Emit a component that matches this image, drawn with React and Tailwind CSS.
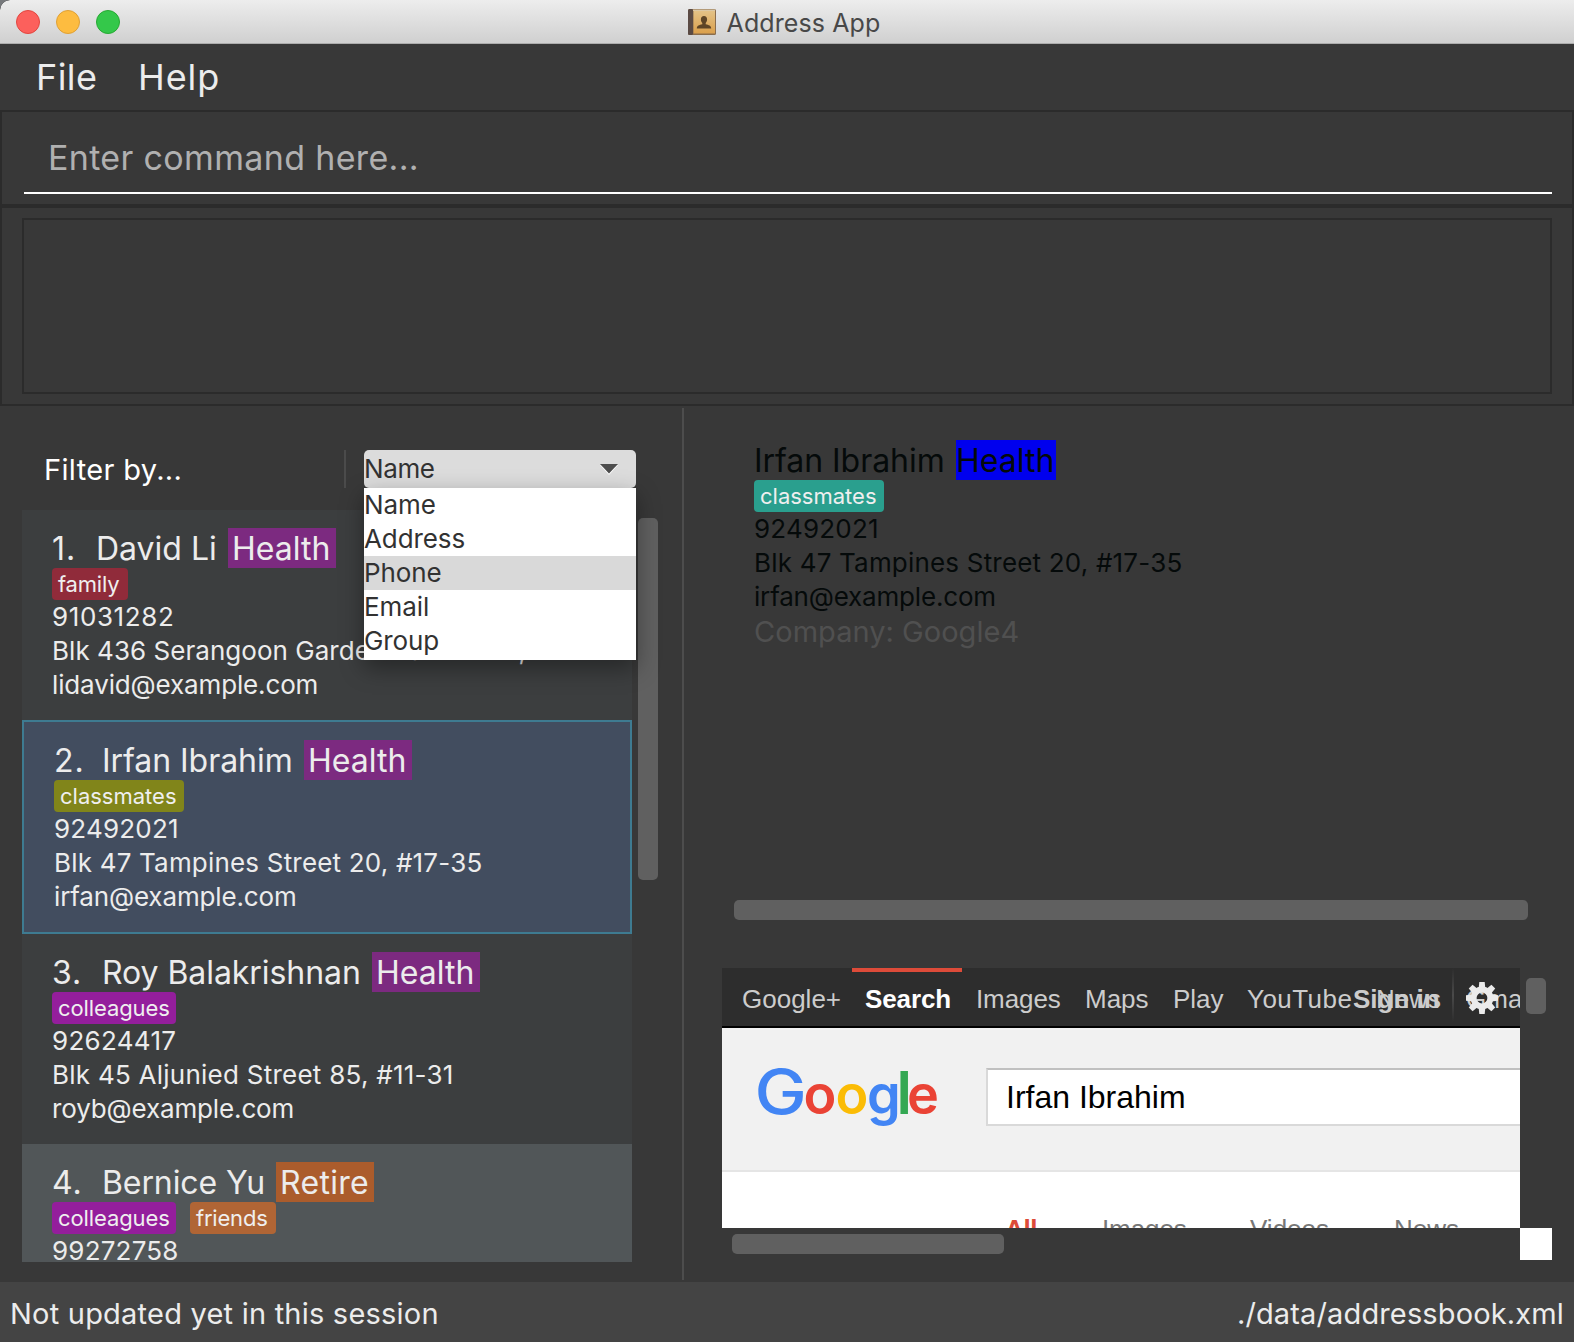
const contacts = [
  {
    index: '1.', name: 'David Li', group: 'Health', groupClass: 'w-[108px] bg-[#7c2a80]',
    indexClass: 'w-[44px]', nameClass: 'w-[132px]',
    tags: [['family', 'w-[76px] bg-[#902b3a] tracking-[-0.2px]']],
    phone: '91031282', phoneClass: 'tracking-[0.6px]',
    address: 'Blk 436 Serangoon Gardens Street 26, #16-43', addressClass: 'tracking-[0.04px]',
    email: 'lidavid@example.com',
    rowClass: 'h-[210px] px-[30px] py-[18px] bg-[#3c3e3f]',
  },
  {
    index: '2.', name: 'Irfan Ibrahim', group: 'Health', groupClass: 'w-[108px] bg-[#7c2a80]',
    indexClass: 'w-[48px]', nameClass: 'w-[202px] tracking-[-0.05px]',
    tags: [['classmates', 'w-[130px] bg-[#81851a]']],
    phone: '92492021', phoneClass: 'tracking-[0.2px]',
    address: 'Blk 47 Tampines Street 20, #17-35', addressClass: 'tracking-[0.19px]',
    email: 'irfan@example.com',
    rowClass: 'h-[214px] border-2 border-[#3e7b91] px-[30px] py-[18px] bg-[#424d5f]',
  },
  {
    index: '3.', name: 'Roy Balakrishnan', group: 'Health', groupClass: 'w-[108px] bg-[#7c2a80]',
    indexClass: 'w-[50px]', nameClass: 'w-[270px] tracking-[-0.06px]',
    tags: [['colleagues', 'w-[124px] bg-[#941e9c] tracking-[-0.1px]']],
    phone: '92624417', phoneClass: 'tracking-[0.3px]',
    address: 'Blk 45 Aljunied Street 85, #11-31', addressClass: 'tracking-[0.25px]',
    email: 'royb@example.com',
    rowClass: 'h-[210px] px-[30px] py-[18px] bg-[#3c3e3f]',
  },
  {
    index: '4.', name: 'Bernice Yu', group: 'Retire', groupClass: 'w-[98px] bg-[#ab5c2c] tracking-[0.3px]',
    indexClass: 'w-[50px]', nameClass: 'w-[174px] tracking-[-0.1px]',
    tags: [
      ['colleagues', 'w-[124px] bg-[#941e9c] tracking-[-0.1px]'],
      ['friends', 'w-[86px] bg-[#b06535] tracking-[-0.2px]'],
    ],
    phone: '99272758', phoneClass: 'tracking-[0.2px]',
    address: '', addressClass: '', email: '',
    rowClass: 'h-[118px] px-[30px] py-[18px] bg-[#515658]',
  },
];

const filters = ['Name', 'Address', 'Phone', 'Email', 'Group'];

const navItems = [
  ['Google+', 'w-[123px]'],
  ['Search', 'w-[111px] font-bold text-white tracking-[-0.1px]'],
  ['Images', 'w-[109px] tracking-[-0.1px]'],
  ['Maps', 'w-[88px]'],
  ['Play', 'w-[74px]'],
  ['YouTube', 'w-[129px] tracking-[0.45px]'],
  ['News', 'w-[90px]'],
  ['Gmail', 'w-[90px]'],
];

function Tag({ label, className }) {
  return (
    <span className={`h-8 shrink-0 rounded-[4px] pl-1.5 text-[22px] leading-8 text-[#efefef] ${className}`}>
      {label}
    </span>
  );
}

function ContactRow({ contact: c }) {
  return (
    <div className={`shrink-0 overflow-hidden whitespace-nowrap text-[#ececec] ${c.rowClass}`}>
      <div className="flex h-10 text-[32px] leading-[42px]">
        <span className={`shrink-0 tracking-[1px] ${c.indexClass}`}>{c.index}</span>
        <span className={`shrink-0 ${c.nameClass}`}>{c.name}</span>
        <span className={`h-10 shrink-0 pl-1 ${c.groupClass}`}>{c.group}</span>
      </div>
      <div className="flex gap-3.5">
        {c.tags.map(([label, cls]) => <Tag key={label} label={label} className={cls} />)}
      </div>
      <div className="text-[26px] leading-[34px]">
        <p className={c.phoneClass}>{c.phone}</p>
        <p className={c.addressClass}>{c.address}</p>
        <p className="tracking-[-0.14px]">{c.email}</p>
      </div>
    </div>
  );
}

function AddressBookIcon() {
  return (
    <svg className="h-7 w-7" viewBox="0 0 28 28">
      <defs>
        <linearGradient id="cover" x1="0" y1="0" x2="0" y2="1">
          <stop offset="0" stopColor="#e3c286" />
          <stop offset="1" stopColor="#dba04c" />
        </linearGradient>
      </defs>
      <rect x="0" y="1" width="28" height="26" rx="1.5" fill="#8a6d4d" />
      <rect x="0" y="1" width="5" height="26" rx="1.5" fill="#5a4a44" />
      <rect x="5.5" y="3" width="21.5" height="22.5" fill="url(#cover)" />
      <rect x="5" y="1.6" width="22" height="1.2" fill="#f1dfba" />
      <path d="M16 8c2 0 3.100 1.400 3.100 3.400 0 1.500-.7 2.700-1.400 3.500v1.300c3 .8 5.500 1.300 5.500 4.300H8.800c0-3 2.500-3.500 5.500-4.300v-1.300c-.8-.8-1.400-2-1.400-3.500C12.900 9.400 14 8 16 8z" fill="#5e4526" />
    </svg>
  );
}

function Gear() {
  const angles = [0, 45, 90, 135, 180, 225, 270, 315];
  return (
    <svg className="absolute left-[743px] top-[13px] h-[34px] w-[34px]" viewBox="-17 -17 34 34">
      <g fill="#ebebeb">
        {angles.map((a) => (
          <path key={a} d="M-3.400 -9 L-2.700 -16 H2.700 L3.400 -9 Z" transform={`rotate(${a})`} />
        ))}
      </g>
      <circle r="8.400" fill="none" stroke="#ebebeb" strokeWidth="6" />
    </svg>
  );
}

function GoogleLogo() {
  return (
    <svg className="ml-9 h-[72px] w-[184px] shrink-0" viewBox="0 0 184 72" fontFamily="Inter, sans-serif" fontSize="54" fontWeight="600">
      <text y="50.5" transform="scale(1.13 1)" fontSize="62" fontWeight="500" fill="#4285f4" x="-3.2">G</text>
      <text y="50.5">
        <tspan x="45.5" fill="#ea4335">o</tspan>
        <tspan x="77.5" fill="#fbbc05">o</tspan>
        <tspan x="109" fill="#4285f4">g</tspan>
        <tspan x="138.5" fill="#34a853" fontSize="59">l</tspan>
        <tspan x="149" fill="#ea4335">e</tspan>
      </text>
    </svg>
  );
}

function TitleBar() {
  return (
    <header className="relative flex h-11 items-center justify-center rounded-tl-[10px] border-b border-[#adadad] bg-linear-to-b from-[#ededed] to-[#d0d0d0]">
      <div className="absolute left-4 top-[10px] flex gap-4">
        <span className="size-6 rounded-full border border-[#e2463f] bg-[#fc605c]" />
        <span className="size-6 rounded-full border border-[#dfa035] bg-[#fdbc40]" />
        <span className="size-6 rounded-full border border-[#27a933] bg-[#34c84a]" />
      </div>
      <AddressBookIcon />
      <h1 className="ml-[11px] mr-[6px] h-[44px] text-[25px] leading-[46px] tracking-[0.1px] text-[#484848]">Address App</h1>
    </header>
  );
}

function FilterBar() {
  return (
    <div className="relative mt-[42px] flex h-[38px] shrink-0 items-center">
      <span className="h-[38px] w-[322px] pl-[22px] text-[29px] leading-[40px] tracking-[0.35px] text-white">Filter by...</span>
      <span className="h-full w-0.5 bg-[#4b4b4b]" />
      <div className="ml-[18px] flex h-full w-[272px] items-center justify-between rounded-[5px] bg-[#dcdcdc] pr-[18px] text-[26px] tracking-[-0.4px] text-[#323232]">
        <span className="h-[38px] leading-[37px]">Name</span>
        <svg className="h-3 w-[18px]" viewBox="0 0 18 12">
          <path d="M0 2 H18 L9 12 Z" fill="#fff" />
          <path d="M0 1 H18 L9 10.500 Z" fill="#4d4d4d" />
        </svg>
      </div>
      <ul className="absolute left-[342px] top-[38px] z-10 h-[172px] w-[272px] bg-white text-[26px] leading-[34px] tracking-[-0.1px] text-[#323232] shadow-[0_8px_22px_rgba(0,0,0,0.38)]">
        {filters.map((f) => (
          <li key={f} className={f === 'Phone' ? 'bg-[#d9d9d9]' : ''}>{f}</li>
        ))}
      </ul>
    </div>
  );
}

function BrowserPane() {
  return (
    <div className="ml-[38px] mt-12">
      <div className="flex">
        <div className="relative h-[260px] w-[798px] overflow-hidden bg-white font-['Liberation_Sans',Arial,sans-serif]">
          <div className="h-[60px] border-b-2 border-black bg-[#2d2d2d]">
            <nav className="flex pl-5 text-[26px] leading-[62px] text-[#cccccc]">
              {navItems.map(([label, cls]) => (
                <span key={label} className={`h-[58px] shrink-0 ${cls}`}>{label}</span>
              ))}
            </nav>
            <span className="absolute left-[130px] top-0 h-1 w-[110px] bg-[#dd4b39]" />
            <span className="absolute left-[631px] top-0 text-[26px] font-bold leading-[62px] text-[#cccccc]">Sign in</span>
            <span className="absolute left-[730px] top-0 h-[54px] w-0.5 bg-linear-to-b from-[#2d2d2d] via-[#4a4a4a] to-[#2d2d2d]" />
            <Gear />
          </div>
          <div className="flex h-[144px] items-center border-b-2 border-[#e5e5e5] bg-[#f1f1f1]">
            <GoogleLogo />
            <div className="-mt-[5px] ml-11 h-[58px] flex-1 border-2 border-r-0 border-[#d9d9d9] border-t-[#c0c0c0] bg-white pl-[18px] text-[32px] leading-[54px] text-black">
              Irfan Ibrahim
            </div>
          </div>
          <div className="flex pl-[283px] pt-[41px] text-[26px] leading-[32px] text-[#777777]">
            <span className="w-[97px] font-bold tracking-[-0.4px] text-[#dd4b39]">All</span>
            <span className="w-[148px] tracking-[-0.1px]">Images</span>
            <span className="w-[144px]">Videos</span>
            <span>News</span>
          </div>
        </div>
        <div className="ml-1.5 mt-[10px] h-9 w-5 rounded-[5px] bg-[#606060]" />
      </div>
      <div className="flex">
        <div className="ml-[10px] mr-[516px] mt-1.5 h-5 w-[272px] rounded-[5px] bg-[#606060]" />
        <div className="size-8 bg-white" />
      </div>
    </div>
  );
}

function DetailPane() {
  return (
    <section className="flex-1 pt-8">
      <div className="ml-[70px] h-[460px] whitespace-nowrap text-[#050a0a]">
        <div className="flex h-10 text-[32px] leading-[42px]">
          <span className="w-[202px] tracking-[-0.05px]">Irfan Ibrahim</span>
          <span className="h-10 w-[100px] bg-[#0000ee]">Health</span>
        </div>
        <div className="flex"><Tag label="classmates" className="w-[130px] bg-[#2a9f8e]" /></div>
        <div className="text-[26px] leading-[34px]">
          <p className="tracking-[0.2px]">92492021</p>
          <p className="tracking-[0.19px]">Blk 47 Tampines Street 20, #17-35</p>
          <p className="tracking-[-0.18px]">irfan@example.com</p>
        </div>
        <p className="text-[29px] leading-[36px] tracking-[0.03px] text-[#505050]">Company: Google4</p>
      </div>
      <div className="ml-[50px] h-5 w-[794px] rounded-[5px] bg-[#606060]" />
      <BrowserPane />
    </section>
  );
}

export default function App() {
  return (
    <div className="bg-[#77797c]">
      <div className="flex h-[1342px] w-[1574px] flex-col overflow-hidden rounded-tl-[10px] bg-[#383838] font-['Inter',sans-serif]">
        <TitleBar />
        <nav className="flex h-[66px] items-center pl-9 text-[36px] text-[#ececec]">
          <span className="w-[102px] tracking-[0.45px]">File</span>
          <span className="tracking-[0.9px]">Help</span>
        </nav>
        <div className="h-24 border-2 border-[#2b2b2b] px-[22px]">
          <div className="-mr-0.5 h-[82px] border-b-2 border-white pl-6 pt-[10px] text-[34px] leading-[72px] tracking-[0.34px] text-[#b0b0b0]">
            Enter command here...
          </div>
        </div>
        <div className="h-[200px] border-2 border-[#2b2b2b] px-5 py-[10px]">
          <div className="h-full border-2 border-[#2b2b2b]" />
        </div>
        <main className="flex h-[876px] pb-0.5 pt-0.5">
          <section className="flex w-[682px] flex-col pl-[22px]">
            <FilterBar />
            <div className="mt-[22px] flex">
              <div className="flex h-[752px] w-[610px] flex-col overflow-hidden">
                {contacts.map((c) => <ContactRow key={c.index} contact={c} />)}
              </div>
              <div className="ml-1.5 mt-2 h-[362px] w-5 rounded-[5px] bg-[#606060]" />
            </div>
          </section>
          <div className="w-0.5 bg-[#4d4d4d]" />
          <DetailPane />
        </main>
        <footer className="flex h-[60px] items-center justify-between bg-[#444444] pl-[10px] pr-[10px] pt-1 text-[29px] text-[#ececec]">
          <span className="tracking-[0.22px]">Not updated yet in this session</span>
          <span className="tracking-[0.14px]">./data/addressbook.xml</span>
        </footer>
      </div>
    </div>
  );
}
